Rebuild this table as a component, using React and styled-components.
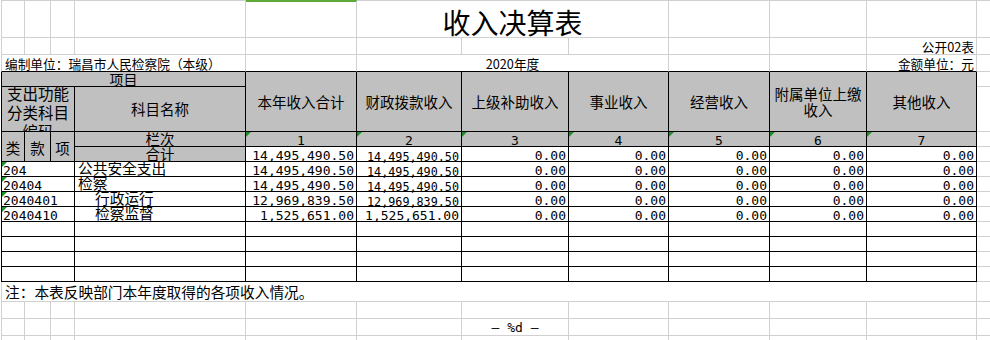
import React from 'react';
import styled, { createGlobalStyle, css } from 'styled-components';

const GRID = '#d0d0d0';
const INK = '#000';
const HEAD_BG = '#c0c0c0';
const SEL = '#5fa83a';
const FLAG = '#1f8f2a';
const CJK = '"Noto Sans CJK SC", "Noto Sans", sans-serif';
const MONO = '"DejaVu Sans Mono", "Liberation Mono", "Noto Sans CJK SC", monospace';

const COLS = [24, 26, 24, 171, 111, 105, 107, 100, 101, 97, 110, 13];
const ROWS = [38, 17, 17, 15, 45, 15, 15, 15, 15, 15, 15, 15, 15, 15, 15, 20, 17, 17, 17];

const H = { l: 'flex-start', c: 'center', r: 'flex-end' };
const V = { t: 'flex-start', c: 'center', b: 'flex-end' };

const Global = createGlobalStyle`
  html, body { margin: 0; padding: 0; background: #fff; overflow: hidden; }
  body { font-family: ${CJK}; color: #000; }
`;

const Sheet = styled.div`
  display: grid;
  grid-template-columns: ${COLS.map((w) => `${w}px`).join(' ')};
  grid-template-rows: ${ROWS.map((h) => `${h}px`).join(' ')};
  margin-left: 1px;
  width: max-content;
`;

const Cell = styled.div`
  box-sizing: border-box;
  position: relative;
  min-width: 0;
  grid-column: span ${(p) => p.$span || 1};
  grid-row: span ${(p) => p.$rows || 1};
  display: flex;
  justify-content: ${(p) => H[p.$h || 'l']};
  align-items: ${(p) => V[p.$v || 'b']};
  padding: ${(p) => p.$ptop || 0}px ${(p) => (p.$pr != null ? p.$pr : 2)}px 0
    ${(p) => (p.$pl != null ? p.$pl : 2)}px;
  border-right: ${(p) => (p.$open ? 'none' : `1px solid ${p.$ink ? INK : GRID}`)};
  border-bottom: 1px solid ${(p) => (p.$ink || p.$edge ? INK : GRID)};
  border-left: ${(p) => (p.$first ? `1px solid ${p.$ink ? INK : GRID}` : 'none')};
  border-top: ${(p) =>
    p.$top === 'sel' ? `2px solid ${SEL}` : p.$top ? `1px solid ${GRID}` : 'none'};
  background: ${(p) => (p.$fill ? HEAD_BG : 'transparent')};
  font-family: ${CJK};
  font-size: 14.7px;
  line-height: 1;
  white-space: nowrap;
  ${(p) =>
    p.$flag &&
    css`
      &::before {
        content: '';
        position: absolute;
        top: 0;
        left: 0;
        border-top: 5px solid ${FLAG};
        border-right: 5px solid transparent;
      }
    `}
`;

const EdgeCell = styled(Cell).attrs({ $open: true })``;

const Title = styled(Cell)`
  font-size: 28px;
  line-height: 28px;
  padding-bottom: 1px;
`;

const Caption = styled(Cell)`
  font-size: 12.7px;
`;

const TableCell = styled(Cell).attrs({ $ink: true })``;

const HeadCell = styled(TableCell).attrs({ $fill: true })`
  font-size: ${(p) => p.$size || 14.5}px;
`;

const HeadLabel = styled(HeadCell).attrs({ $rows: 2, $h: 'c', $v: 'c' })`
  white-space: normal;
  text-align: center;
  line-height: 16px;
`;

const IndexHead = styled(HeadCell).attrs({ $rows: 2, $h: 'c', $v: 'c', $pl: 0, $pr: 0, $ptop: 3 })``;

const CodeHead = styled(HeadCell).attrs({ $span: 3, $first: true, $h: 'c', $v: 't' })`
  overflow: hidden;
  white-space: normal;
  font-size: 15.5px;
  line-height: 19px;
  text-align: center;
`;

const CodeHeadText = styled.span`
  display: block;
  margin-top: -3px;
`;

const Mono = css`
  font-family: ${MONO};
  font-size: ${(p) => p.$size || 13}px;
  line-height: 0.69;
`;

const HeadNum = styled(HeadCell).attrs({ $h: 'c', $flag: true })`
  ${Mono}
`;

const NumCell = styled(TableCell).attrs({ $h: 'r' })`
  ${Mono}
`;

const CodeCell = styled(TableCell).attrs({ $span: 3, $first: true, $pl: 1 })`
  ${Mono}
`;

const NameCell = styled(TableCell)`
  padding-left: ${(p) => (p.$indent ? 20 : 3)}px;
`;

const Note = styled(Cell).attrs({ $span: 11, $first: true, $pl: 3 })`
  font-size: 14.7px;
  padding-bottom: 1px;
`;

const PageMark = styled(Cell).attrs({ $h: 'c' })`
  font-family: ${MONO};
  font-size: 13px;
  line-height: 13px;
  padding-bottom: 1px;
`;

const HEADS = ['本年收入合计', '财政拨款收入', '上级补助收入', '事业收入', '经营收入', '附属单位上缴收入', '其他收入'];

const zero = ['0.00', '0.00', '0.00', '0.00', '0.00'];
const TOTAL = ['14,495,490.50', '14,495,490.50', ...zero];
const DATA = [
  { code: '204', name: '公共安全支出', vals: ['14,495,490.50', '14,495,490.50', ...zero] },
  { code: '20404', name: '检察', vals: ['14,495,490.50', '14,495,490.50', ...zero] },
  { code: '2040401', name: '行政运行', indent: true, vals: ['12,969,839.50', '12,969,839.50', ...zero] },
  { code: '2040410', name: '检察监督', indent: true, vals: ['1,525,651.00', '1,525,651.00', ...zero] },
];

const range = (a, b) => Array.from({ length: b - a }, (_, i) => a + i);

function Numbers({ vals, rowKey }) {
  return vals.map((v, i) => (
    <NumCell key={`${rowKey}-${i}`} $size={i === 1 && v.length >= 13 ? 11.75 : 13}>
      {v}
    </NumCell>
  ));
}

function PlainRow({ rowKey }) {
  return (
    <>
      {range(0, 11).map((i) => (
        <Cell key={`${rowKey}-${i}`} $first={i === 0} />
      ))}
      <EdgeCell />
    </>
  );
}

export default function App() {
  return (
    <>
      <Global />
      <Sheet>
        {/* row 0: title */}
        {range(0, 4).map((i) => (
          <Cell key={`r0-${i}`} $first={i === 0} $top="grid" />
        ))}
        <Cell $top="sel" />
        <Title $span={3} $h="c" $top="grid">收入决算表</Title>
        {range(8, 11).map((i) => (
          <Cell key={`r0-${i}`} $top="grid" />
        ))}
        <EdgeCell $top="grid" />

        {/* row 1 */}
        {range(0, 10).map((i) => (
          <Cell key={`r1-${i}`} $first={i === 0} />
        ))}
        <Caption $h="r">公开02表</Caption>
        <EdgeCell />

        {/* row 2 */}
        <Caption $span={4} $first $edge $pl={3}>编制单位：瑞昌市人民检察院（本级）</Caption>
        <Cell $edge />
        <Caption $span={3} $h="c" $edge>2020年度</Caption>
        <Cell $edge />
        <Cell $edge />
        <Caption $h="r" $edge>金额单位：元</Caption>
        <EdgeCell />

        {/* row 3: header */}
        <HeadCell $span={4} $first $h="c" $size={14}>项目</HeadCell>
        {HEADS.map((h) => (
          <HeadLabel key={h}>{h}</HeadLabel>
        ))}
        <EdgeCell />

        {/* row 4 */}
        <CodeHead>
          <CodeHeadText>支出功能分类科目编码</CodeHeadText>
        </CodeHead>
        <HeadCell $h="c" $v="c">科目名称</HeadCell>
        <EdgeCell />

        {/* row 5 */}
        <IndexHead $first>类</IndexHead>
        <IndexHead>款</IndexHead>
        <IndexHead>项</IndexHead>
        <HeadCell $h="c">栏次</HeadCell>
        {range(1, 8).map((n) => (
          <HeadNum key={`n${n}`}>{n}</HeadNum>
        ))}
        <EdgeCell />

        {/* row 6: total */}
        <HeadCell $h="c">合计</HeadCell>
        <Numbers vals={TOTAL} rowKey="total" />
        <EdgeCell />

        {/* data rows */}
        {DATA.map((d) => (
          <React.Fragment key={d.code}>
            <CodeCell $flag>{d.code}</CodeCell>
            <NameCell $indent={d.indent}>{d.name}</NameCell>
            <Numbers vals={d.vals} rowKey={d.code} />
            <EdgeCell />
          </React.Fragment>
        ))}

        {/* empty table rows */}
        {range(0, 4).map((r) => (
          <React.Fragment key={`e${r}`}>
            <TableCell $span={3} $first />
            <TableCell />
            {range(4, 11).map((i) => (
              <TableCell key={`e${r}-${i}`} />
            ))}
            <EdgeCell />
          </React.Fragment>
        ))}

        {/* note */}
        <Note>注：本表反映部门本年度取得的各项收入情况。</Note>
        <EdgeCell />

        <PlainRow rowKey="r16" />

        {/* row 17: page mark */}
        {range(0, 6).map((i) => (
          <Cell key={`r17-${i}`} $first={i === 0} />
        ))}
        <PageMark>— %d —</PageMark>
        {range(7, 11).map((i) => (
          <Cell key={`r17-${i}`} />
        ))}
        <EdgeCell />

        <PlainRow rowKey="r18" />
      </Sheet>
    </>
  );
}
